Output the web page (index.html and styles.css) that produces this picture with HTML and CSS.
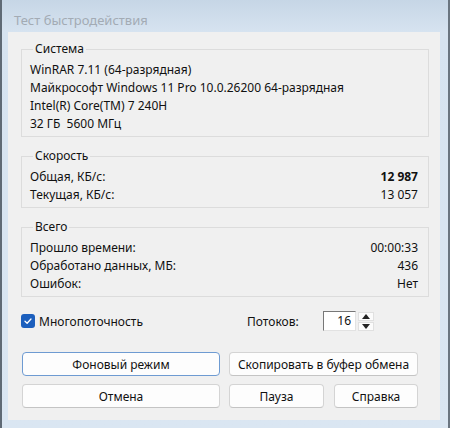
FILE: index.html
```html
<!DOCTYPE html>
<html lang="ru">
<head>
<meta charset="utf-8">
<title>Тест быстродействия</title>
<link rel="stylesheet" href="styles.css">
</head>
<body>
<div class="window">
  <div class="titlebar">Тест быстродействия</div>
  <div class="client">
    <fieldset class="group g-system">
      <legend>Система</legend>
      <div class="line">WinRAR 7.11 (64-разрядная)</div>
      <div class="line">Майкрософт Windows 11 Pro 10.0.26200 64-разрядная</div>
      <div class="line">Intel(R) Core(TM) 7 240H</div>
      <div class="line">32 ГБ&nbsp; 5600 МГц</div>
    </fieldset>
    <fieldset class="group">
      <legend>Скорость</legend>
      <div class="row"><span>Общая, КБ/с:</span><span class="bold">12 987</span></div>
      <div class="row"><span>Текущая, КБ/с:</span><span>13 057</span></div>
    </fieldset>
    <fieldset class="group">
      <legend>Всего</legend>
      <div class="row"><span>Прошло времени:</span><span>00:00:33</span></div>
      <div class="row"><span>Обработано данных, МБ:</span><span>436</span></div>
      <div class="row"><span>Ошибок:</span><span>Нет</span></div>
    </fieldset>
    <div class="options">
      <label class="check">
        <span class="box"><svg width="10" height="10" viewBox="0 0 10 10"><path d="M2 5.2 L4.1 7.2 L8 3" fill="none" stroke="#fff" stroke-width="1.3" stroke-linecap="round" stroke-linejoin="round"/></svg></span>
        <span>Многопоточность</span>
      </label>
      <div class="threads">
        <span class="threads-label">Потоков:</span>
        <span class="spin-input">16</span>
        <span class="spin-buttons">
          <span class="spin-btn"><svg width="8" height="5" viewBox="0 0 8 5"><path d="M0 5 L4 0 L8 5 Z" fill="#222"/></svg></span>
          <span class="spin-btn"><svg width="8" height="5" viewBox="0 0 8 5"><path d="M0 0 L8 0 L4 5 Z" fill="#222"/></svg></span>
        </span>
      </div>
    </div>
    <div class="buttons">
      <button class="btn default">Фоновый режим</button>
      <button class="btn">Скопировать в буфер обмена</button>
      <button class="btn">Отмена</button>
      <div class="pair">
        <button class="btn">Пауза</button>
        <button class="btn">Справка</button>
      </div>
    </div>
  </div>
</div>
</body>
</html>
```
FILE: styles.css
```css
html, body {
  margin: 0;
  padding: 0;
  background: #dce7f2;
}
.window {
  width: 450px;
  height: 428px;
  box-sizing: border-box;
  border-left: 2px solid #5f6a75;
  border-right: 2px solid #6a7580;
  background: linear-gradient(to bottom, #c6d6e6 0px, #d6e3f0 32px, #dae6f2 100%);
  display: flex;
  flex-direction: column;
  font-family: "Noto Sans", "Segoe UI", sans-serif;
  font-size: 12px;
  color: #111;
}
.titlebar {
  height: 32px;
  flex: none;
  padding-left: 12px;
  font-size: 13px;
  line-height: 40px;
  color: #a3abb4;
}
.client {
  flex: 1;
  margin: 0 8px 8px 6px;
  background: #f0f0f0;
  padding: 8px 11px 0 13px;
  display: flex;
  flex-direction: column;
}
.group {
  margin: 0 0 10px 0;
  padding: 3px 10px 3px 8px;
  border: 1px solid #dcdcdc;
  min-width: 0;
}
.group legend {
  padding: 0 2px;
  margin-left: 3px;
  line-height: 18px;
}
.line, .row {
  line-height: 18px;
  height: 18px;
  white-space: nowrap;
}
.row {
  display: flex;
  justify-content: space-between;
}
.bold { font-weight: bold; }
.options {
  display: flex;
  align-items: center;
  height: 24px;
  margin-top: 2px;
}
.check {
  display: flex;
  align-items: center;
  gap: 4px;
  width: 226px;
}
.box {
  width: 14px;
  height: 14px;
  border-radius: 3px;
  background: #1c5fbd;
  display: flex;
  align-items: center;
  justify-content: center;
}
.threads {
  display: flex;
  align-items: center;
}
.threads-label {
  width: 76px;
}
.spin-input {
  width: 27px;
  height: 18px;
  line-height: 18px;
  padding-right: 4px;
  text-align: right;
  background: #fff;
  border-left: 1px solid #777;
  border-top: 1px solid #777;
  border-right: 1px solid #e2e2e2;
  border-bottom: 1px solid #e2e2e2;
}
.spin-buttons {
  display: flex;
  flex-direction: column;
  margin-left: 2px;
  gap: 1px;
}
.spin-btn {
  width: 16px;
  height: 9px;
  background: #fbfbfb;
  border: 1px solid #e0e0e0;
  box-sizing: border-box;
  display: flex;
  align-items: center;
  justify-content: center;
}
.buttons {
  display: grid;
  grid-template-columns: 198px 189px;
  column-gap: 9px;
  row-gap: 8px;
  margin-top: 19px;
  margin-left: 1px;
}
.pair {
  display: grid;
  grid-template-columns: 95px 84px;
  column-gap: 10px;
}
.btn {
  height: 24px;
  font-family: inherit;
  font-size: 12px;
  color: #111;
  background: #fdfdfd;
  border: 1px solid #d4d4d4;
  border-bottom-color: #c4c4c4;
  border-radius: 4px;
  padding: 0;
}
.btn.default {
  border-color: #6e9bd2;
}
```
